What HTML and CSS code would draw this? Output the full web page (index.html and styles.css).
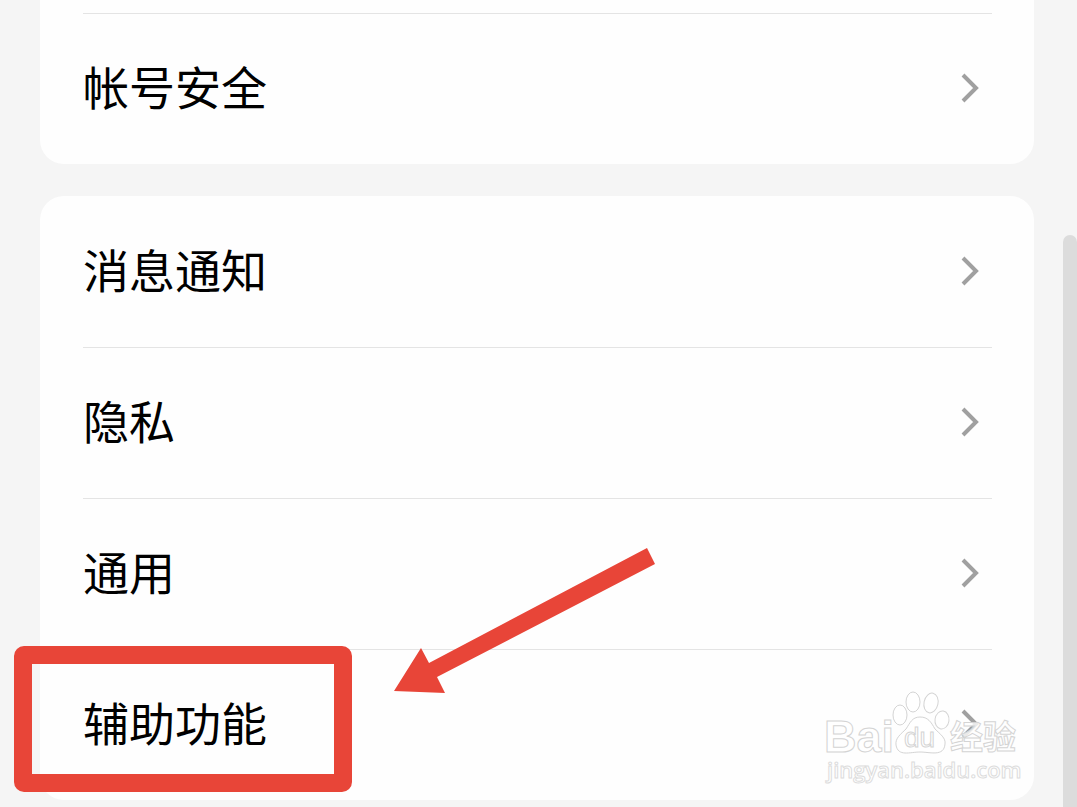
FILE: index.html
```html
<!DOCTYPE html>
<html lang="zh-CN">
  <head>
    <meta charset="UTF-8" />
    <meta name="viewport" content="width=device-width, initial-scale=1.0" />
    <title>设置</title>
    <link rel="stylesheet" href="styles.css">
  </head>
  <body>
    <main class="settings">
      <nav class="card card-top">
        <a class="row" href="#account">
          <span class="label">帐号安全</span>
          <svg class="chevron" viewBox="0 0 20 32"><path d="M3 3 L16 16 L3 29" /></svg>
        </a>
      </nav>
      <nav class="card">
        <a class="row" href="#notifications">
          <span class="label">消息通知</span>
          <svg class="chevron" viewBox="0 0 20 32"><path d="M3 3 L16 16 L3 29" /></svg>
        </a>
        <a class="row" href="#privacy">
          <span class="label">隐私</span>
          <svg class="chevron" viewBox="0 0 20 32"><path d="M3 3 L16 16 L3 29" /></svg>
        </a>
        <a class="row" href="#general">
          <span class="label">通用</span>
          <svg class="chevron" viewBox="0 0 20 32"><path d="M3 3 L16 16 L3 29" /></svg>
        </a>
        <a class="row" href="#accessibility">
          <span class="label">辅助功能</span>
          <svg class="chevron" viewBox="0 0 20 32"><path d="M3 3 L16 16 L3 29" /></svg>
        </a>
        <div class="highlight"></div>
        <svg class="arrow" viewBox="0 0 262 147">
          <path d="M0 143 L27 100 L35 115 L253 0 L261 16 L43 129 L51 145 Z" />
        </svg>
        <svg class="watermark" viewBox="0 0 200 96">
          <g class="mark">
            <ellipse cx="75" cy="23" rx="7" ry="10" />
            <ellipse cx="88" cy="10" rx="7" ry="10" />
            <ellipse cx="106" cy="11" rx="7" ry="10" transform="rotate(12 106 11)" />
            <ellipse cx="117" cy="28" rx="7" ry="9" transform="rotate(8 117 28)" />
            <path d="M95 25 C87 25 85 31 81 37 C76 42 70 46 71 53 C73 65 85 60 95 60 C105 60 119 65 120 52 C121 46 115 42 110 37 C106 30 103 25 95 25 Z" />
          </g>
          <text class="brand" x="-1" y="60">Bai</text>
          <text class="du" x="79" y="55">du</text>
          <text class="brand-cn" x="125" y="57">经验</text>
          <text class="site" x="2" y="86">jingyan.baidu.com</text>
        </svg>
      </nav>
    </main>
    <div class="scrollbar"></div>
  </body>
</html>
```

FILE: styles.css
```css
body {
  position: relative;
  margin: 0;
  min-height: 100vh;
  background-color: #f5f5f5;
  font-family: "Noto Sans CJK SC", sans-serif;
  color: #000;
}
.settings {
  display: flex;
  flex-direction: column;
  gap: 32px;
  padding: 0 43px 0 40px;
}
.card {
  position: relative;
  padding: 1px 42px 0 43px;
  background-color: #fefefe;
  border-radius: 24px;
}
.card-top {
  padding-top: 13px;
  border-radius: 0 0 24px 24px;
}
.row {
  display: flex;
  align-items: center;
  justify-content: space-between;
  height: 148px;
  padding: 0 12px 2px 0;
  font-size: 46px;
  line-height: 64px;
  color: inherit;
  text-decoration: none;
}
.row + .row,
.card-top .row {
  border-top: 1px solid #e4e4e4;
}
.label {
  padding-bottom: 6px;
}
.chevron {
  width: 20px;
  height: 32px;
  fill: none;
  stroke: #a0a0a0;
  stroke-width: 4;
}

/* red marker around the last row */
.highlight {
  position: absolute;
  left: -26px;
  bottom: 8px;
  box-sizing: border-box;
  width: 338px;
  height: 146px;
  border: 18px solid #e84538;
  border-radius: 10px;
}
.arrow {
  position: absolute;
  left: 354px;
  bottom: 105px;
  width: 262px;
  height: 147px;
  fill: #e84538;
}

.watermark {
  position: absolute;
  right: 9px;
  bottom: 12px;
  width: 200px;
  height: 96px;
  overflow: visible;
  fill: #fff;
  stroke: #d4d4d4;
}
.watermark text {
  font-family: "Liberation Sans", sans-serif;
  font-weight: bold;
}
.watermark .brand {
  font-size: 45px;
}
.watermark .du {
  font-size: 28px;
  font-weight: normal;
}
.watermark .brand-cn {
  font-family: "Noto Sans CJK SC", sans-serif;
  font-size: 33px;
  fill-opacity: 0.8;
}
.watermark .site {
  font-family: "Open Sans", sans-serif;
  font-size: 22px;
  font-weight: 600;
  stroke: #dcdcdc;
}

.scrollbar {
  position: absolute;
  top: 235px;
  right: 0;
  bottom: 0;
  width: 14px;
  background-color: #dcdcdc;
  border-top-left-radius: 7px;
  border-top-right-radius: 7px;
}
```
